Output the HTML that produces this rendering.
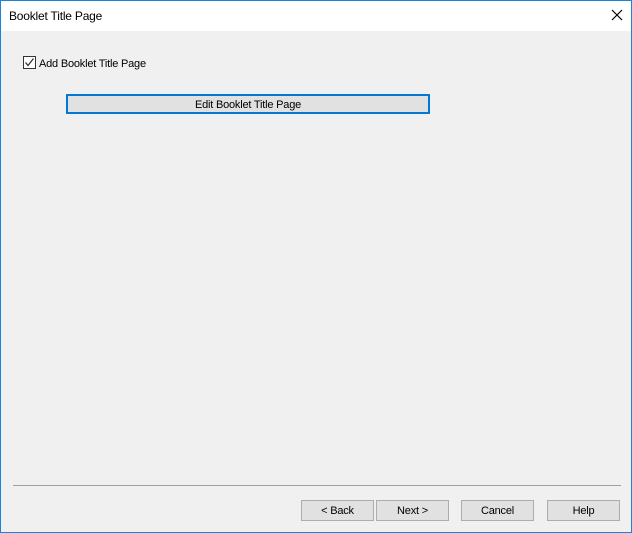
<!DOCTYPE html>
<html><head><style>
body{margin:0;width:632px;height:533px;overflow:hidden;font-family:"Liberation Sans",sans-serif;font-size:11px;color:#000;letter-spacing:-0.2px}
.win{position:absolute;left:0;top:0;width:630px;height:531px;border:1px solid #1883d7;background:#f0f0f0}
.title{position:absolute;left:0;top:0;width:630px;height:30px;background:#fff;font-size:12px}
.title span{position:absolute;left:8px;top:8px}
.x{position:absolute;left:608px;top:6px;width:16px;height:16px}
.cb{position:absolute;left:22px;top:55px;width:11px;height:11px;border:1px solid #333;background:#fff}
.lbl{position:absolute;left:38px;top:57px}
.btn{position:absolute;height:19px;background:#e1e1e1;border:1px solid #adadad;text-align:center;line-height:21px;box-sizing:content-box}
.sep{position:absolute;left:12px;top:484px;width:608px;height:1px;background:#a0a0a0}
</style></head><body>
<div class="win">
<div class="title"><span>Booklet Title Page</span>
<svg class="x" viewBox="0 0 16 16"><path d="M3 3L13 13M13 3L3 13" stroke="#000" stroke-width="1.2"/></svg></div>
<div class="cb"><svg width="11" height="11" viewBox="0 0 11 11"><path d="M1.5 5.5L4 8.5L9.5 1.5" stroke="#333" stroke-width="1.3" fill="none"/></svg></div>
<div class="lbl">Add Booklet Title Page</div>
<div class="btn" style="left:65px;top:93px;width:360px;height:16px;line-height:18px;border:2px solid #0078d7">Edit Booklet Title Page</div>
<div class="sep"></div>
<div class="btn" style="left:300px;top:499px;width:71px">&lt; Back</div>
<div class="btn" style="left:375px;top:499px;width:71px">Next &gt;</div>
<div class="btn" style="left:460px;top:499px;width:71px">Cancel</div>
<div class="btn" style="left:546px;top:499px;width:71px">Help</div>
</div>
</body></html>
